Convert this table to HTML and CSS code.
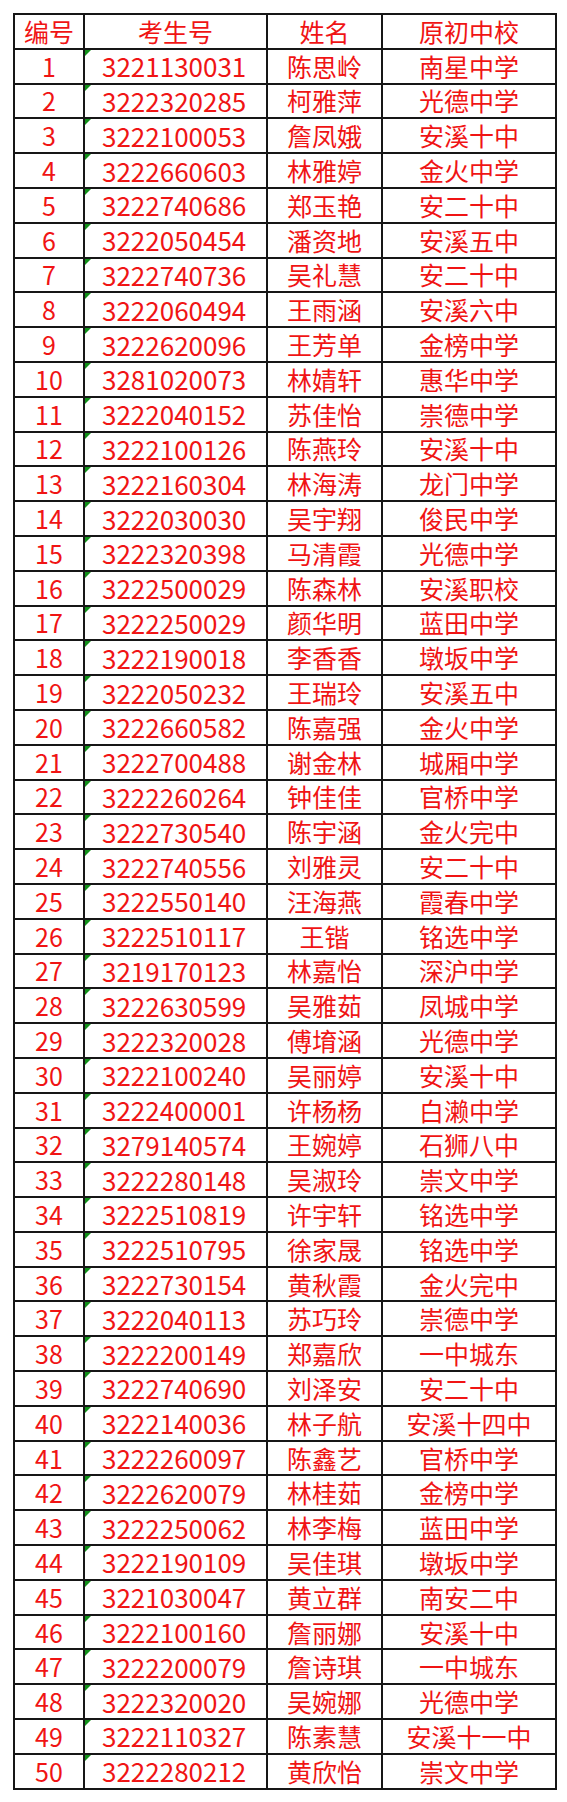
FILE: index.html
```html
<!DOCTYPE html>
<html lang="zh-CN">
<head>
<meta charset="utf-8">
<title>名单</title>
<link rel="stylesheet" href="styles.css">
</head>
<body>
<table class="roster">
<colgroup><col class="c-no"><col class="c-id"><col class="c-name"><col class="c-school"></colgroup>
<thead>
<tr><th>编号</th><th>考生号</th><th>姓名</th><th>原初中校</th></tr>
</thead>
<tbody>
<tr><td>1</td><td class="id">3221130031</td><td>陈思岭</td><td>南星中学</td></tr>
<tr><td>2</td><td class="id">3222320285</td><td>柯雅萍</td><td>光德中学</td></tr>
<tr><td>3</td><td class="id">3222100053</td><td>詹凤娥</td><td>安溪十中</td></tr>
<tr><td>4</td><td class="id">3222660603</td><td>林雅婷</td><td>金火中学</td></tr>
<tr><td>5</td><td class="id">3222740686</td><td>郑玉艳</td><td>安二十中</td></tr>
<tr><td>6</td><td class="id">3222050454</td><td>潘资地</td><td>安溪五中</td></tr>
<tr><td>7</td><td class="id">3222740736</td><td>吴礼慧</td><td>安二十中</td></tr>
<tr><td>8</td><td class="id">3222060494</td><td>王雨涵</td><td>安溪六中</td></tr>
<tr><td>9</td><td class="id">3222620096</td><td>王芳单</td><td>金榜中学</td></tr>
<tr><td>10</td><td class="id">3281020073</td><td>林婧轩</td><td>惠华中学</td></tr>
<tr><td>11</td><td class="id">3222040152</td><td>苏佳怡</td><td>崇德中学</td></tr>
<tr><td>12</td><td class="id">3222100126</td><td>陈燕玲</td><td>安溪十中</td></tr>
<tr><td>13</td><td class="id">3222160304</td><td>林海涛</td><td>龙门中学</td></tr>
<tr><td>14</td><td class="id">3222030030</td><td>吴宇翔</td><td>俊民中学</td></tr>
<tr><td>15</td><td class="id">3222320398</td><td>马清霞</td><td>光德中学</td></tr>
<tr><td>16</td><td class="id">3222500029</td><td>陈森林</td><td>安溪职校</td></tr>
<tr><td>17</td><td class="id">3222250029</td><td>颜华明</td><td>蓝田中学</td></tr>
<tr><td>18</td><td class="id">3222190018</td><td>李香香</td><td>墩坂中学</td></tr>
<tr><td>19</td><td class="id">3222050232</td><td>王瑞玲</td><td>安溪五中</td></tr>
<tr><td>20</td><td class="id">3222660582</td><td>陈嘉强</td><td>金火中学</td></tr>
<tr><td>21</td><td class="id">3222700488</td><td>谢金林</td><td>城厢中学</td></tr>
<tr><td>22</td><td class="id">3222260264</td><td>钟佳佳</td><td>官桥中学</td></tr>
<tr><td>23</td><td class="id">3222730540</td><td>陈宇涵</td><td>金火完中</td></tr>
<tr><td>24</td><td class="id">3222740556</td><td>刘雅灵</td><td>安二十中</td></tr>
<tr><td>25</td><td class="id">3222550140</td><td>汪海燕</td><td>霞春中学</td></tr>
<tr><td>26</td><td class="id">3222510117</td><td>王锴</td><td>铭选中学</td></tr>
<tr><td>27</td><td class="id">3219170123</td><td>林嘉怡</td><td>深沪中学</td></tr>
<tr><td>28</td><td class="id">3222630599</td><td>吴雅茹</td><td>凤城中学</td></tr>
<tr><td>29</td><td class="id">3222320028</td><td>傅堉涵</td><td>光德中学</td></tr>
<tr><td>30</td><td class="id">3222100240</td><td>吴丽婷</td><td>安溪十中</td></tr>
<tr><td>31</td><td class="id">3222400001</td><td>许杨杨</td><td>白濑中学</td></tr>
<tr><td>32</td><td class="id">3279140574</td><td>王婉婷</td><td>石狮八中</td></tr>
<tr><td>33</td><td class="id">3222280148</td><td>吴淑玲</td><td>崇文中学</td></tr>
<tr><td>34</td><td class="id">3222510819</td><td>许宇轩</td><td>铭选中学</td></tr>
<tr><td>35</td><td class="id">3222510795</td><td>徐家晟</td><td>铭选中学</td></tr>
<tr><td>36</td><td class="id">3222730154</td><td>黄秋霞</td><td>金火完中</td></tr>
<tr><td>37</td><td class="id">3222040113</td><td>苏巧玲</td><td>崇德中学</td></tr>
<tr><td>38</td><td class="id">3222200149</td><td>郑嘉欣</td><td>一中城东</td></tr>
<tr><td>39</td><td class="id">3222740690</td><td>刘泽安</td><td>安二十中</td></tr>
<tr><td>40</td><td class="id">3222140036</td><td>林子航</td><td>安溪十四中</td></tr>
<tr><td>41</td><td class="id">3222260097</td><td>陈鑫艺</td><td>官桥中学</td></tr>
<tr><td>42</td><td class="id">3222620079</td><td>林桂茹</td><td>金榜中学</td></tr>
<tr><td>43</td><td class="id">3222250062</td><td>林李梅</td><td>蓝田中学</td></tr>
<tr><td>44</td><td class="id">3222190109</td><td>吴佳琪</td><td>墩坂中学</td></tr>
<tr><td>45</td><td class="id">3221030047</td><td>黄立群</td><td>南安二中</td></tr>
<tr><td>46</td><td class="id">3222100160</td><td>詹丽娜</td><td>安溪十中</td></tr>
<tr><td>47</td><td class="id">3222200079</td><td>詹诗琪</td><td>一中城东</td></tr>
<tr><td>48</td><td class="id">3222320020</td><td>吴婉娜</td><td>光德中学</td></tr>
<tr><td>49</td><td class="id">3222110327</td><td>陈素慧</td><td>安溪十一中</td></tr>
<tr><td>50</td><td class="id">3222280212</td><td>黄欣怡</td><td>崇文中学</td></tr>
</tbody>
</table>
</body>
</html>
```

FILE: styles.css
```css
html, body {
  margin: 0;
  padding: 0;
  background: #ffffff;
}

body {
  padding: 13px 0 0 13px;
  font-family: "Noto Sans CJK SC", "Noto Sans", sans-serif;
  color: #f01414;
}

.roster {
  border-collapse: collapse;
  table-layout: fixed;
  width: 542px;
}

.c-no { width: 70px; }
.c-id { width: 183px; }
.c-name { width: 115px; }
.c-school { width: 174px; }

.roster th,
.roster td {
  border: 2px solid #161616;
  height: 34.8px;
  padding: 0;
  box-sizing: border-box;
  font-size: 25px;
  font-weight: 400;
  line-height: 1;
  text-align: center;
  vertical-align: middle;
  white-space: nowrap;
}

.roster td.id {
  position: relative;
  text-align: left;
  padding-left: 17px;
  font-size: 26px;
}

.roster td.id::before {
  content: "";
  position: absolute;
  left: 0;
  top: 0;
  width: 0;
  height: 0;
  border-top: 6px solid #12911a;
  border-right: 6px solid transparent;
}
```
